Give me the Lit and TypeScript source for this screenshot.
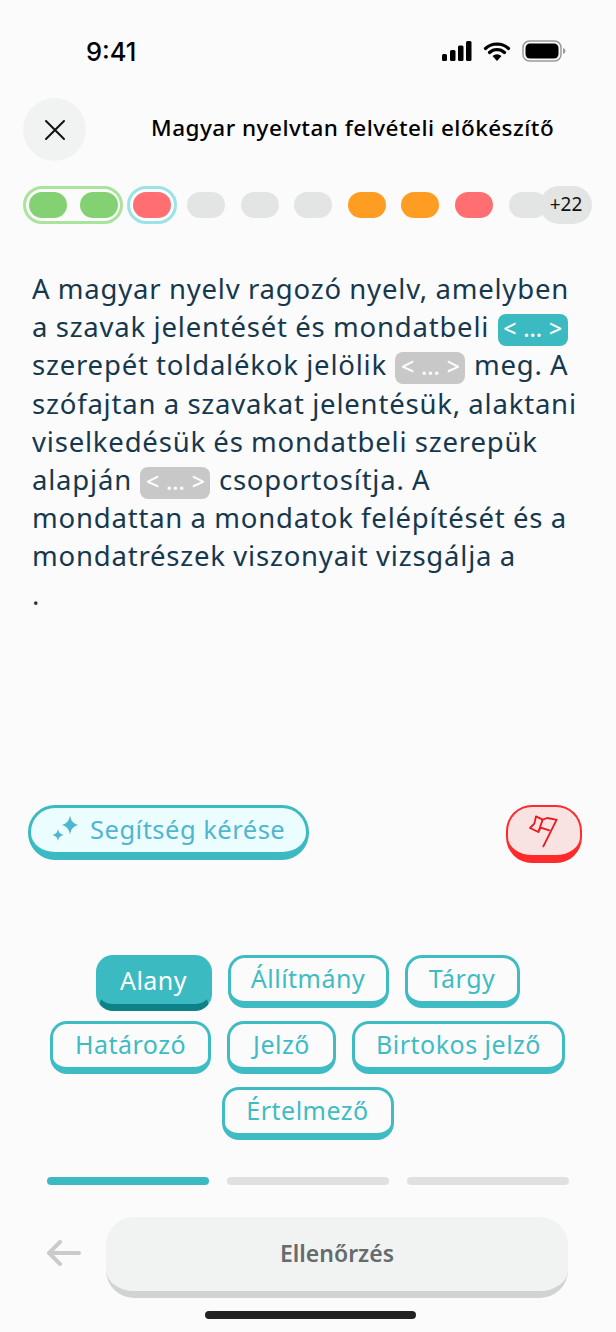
import { LitElement, css, html, svg, type TemplateResult } from "lit";
import { customElement } from "lit/decorators.js";

type Pill = "green" | "red" | "gray" | "orange";

const singlePills: Pill[] = ["gray", "gray", "gray", "orange", "orange", "red"];
const chipRows = [
  [
    { label: "Alany", width: 116 },
    { label: "Állítmány", width: 161 },
    { label: "Tárgy", width: 115 },
  ],
  [
    { label: "Határozó", width: 161 },
    { label: "Jelző", width: 109 },
    { label: "Birtokos jelző", width: 213 },
  ],
  [{ label: "Értelmező", width: 172 }],
];

const closeIcon = svg`<path d="M2 2l18 18M20 2L2 20" fill="none" stroke="#111" stroke-width="2" stroke-linecap="round"/>`;
const sparkle = svg`
  <path d="M19 .5c1.300 5.800 3 8 8.500 9.500-5.500 1.500-7.200 3.700-8.500 9.500-1.300-5.800-3-8-8.500-9.500C16 8.500 17.700 6.300 19 .5z" fill="#4fb6cf"/>
  <path d="M7 14c.8 3.500 1.900 4.900 5.500 6-3.600 1.100-4.700 2.500-5.500 6-.8-3.500-1.900-4.900-5.500-6 3.600-1.100 4.700-2.500 5.500-6z" fill="#4fb6cf"/>`;
const flagIcon = svg`
  <path d="M110 38L70 118" stroke="#e8181c" stroke-width="5.500" stroke-linecap="round" fill="none"/>
  <path d="M48 28L68 38L82 33L107 38M48 28L43 50L30 63L55 75L62 62L88 70M68 38L55 75" stroke="#e8181c" stroke-width="5.500" stroke-linejoin="round" stroke-linecap="round" fill="none"/>`;

@customElement("app-root")
export class AppRoot extends LitElement {
  private blank(kind: "active" | "idle"): TemplateResult {
    return html`<span class="blank ${kind}">&lt; ... &gt;</span>`;
  }

  render(): TemplateResult {
    return html`
      <div class="status">
        <span class="time">9:41</span>
        <div class="status-icons">
          <svg width="30" height="20" viewBox="0 0 30 20">
            <rect x="0" y="13" width="5" height="7" rx="1.500" />
            <rect x="8" y="9" width="5.500" height="11" rx="1.500" />
            <rect x="16" y="4.500" width="5.500" height="15.500" rx="1.500" />
            <rect x="24" y="0" width="5.500" height="20" rx="1.500" />
          </svg>
          <svg width="28" height="20" viewBox="0 0 28 20">
            <path d="M14 3a17 17 0 0 1 11.500 4.500M14 3A17 17 0 0 0 2.500 7.500M14 8.500a11 11 0 0 1 7.500 3M14 8.500a11 11 0 0 0-7.500 3" fill="none" stroke="#000" stroke-width="3.200" stroke-linecap="round" />
            <path d="M14 20l-4.500-5a6.500 6.500 0 0 1 9 0z" />
          </svg>
          <svg width="44" height="22" viewBox="0 0 44 22">
            <rect x="1" y="1" width="38" height="20" rx="6.500" fill="none" stroke="#9a9a9a" stroke-width="1.500" />
            <rect x="3.500" y="3.500" width="33" height="15" rx="4.500" />
            <path d="M41 8v6c1.500-.5 2.500-1.600 2.500-3S42.500 8.500 41 8z" fill="#9a9a9a" />
          </svg>
        </div>
      </div>

      <header class="top">
        <button class="close"><svg width="22" height="22" viewBox="0 0 22 22">${closeIcon}</svg></button>
        <h1>Magyar nyelvtan felvételi előkészítő</h1>
      </header>

      <div class="steps">
        <div class="group green-ring">
          <span class="pill green"></span>
          <span class="pill green"></span>
        </div>
        <div class="group cyan-ring"><span class="pill red"></span></div>
        <div class="singles">
          ${singlePills.map((p) => html`<span class="pill ${p}"></span>`)}
          <span class="pill gray last"></span>
        </div>
        <span class="more">+22</span>
      </div>

      <p class="passage">
        A magyar nyelv ragozó nyelv, amelyben<br />
        a szavak jelentését és mondatbeli ${this.blank("active")}<br />
        szerepét toldalékok jelölik ${this.blank("idle")} meg. A<br />
        szófajtan a szavakat jelentésük, alaktani<br />
        viselkedésük és mondatbeli szerepük<br />
        alapján ${this.blank("idle")} csoportosítja. A<br />
        mondattan a mondatok felépítését és a<br />
        mondatrészek viszonyait vizsgálja a<br />
        .
      </p>

      <div class="helpers">
        <button class="hint">
          <svg width="28" height="27" viewBox="0 0 28 27">${sparkle}</svg>
          Segítség kérése
        </button>
        <button class="flag"><svg width="50" height="50" viewBox="0 0 150 150">${flagIcon}</svg></button>
      </div>

      <div class="chips">
        ${chipRows.map(
          (row) => html`<div class="chip-row">
            ${row.map(
              (c) =>
                html`<button class="chip ${c.label === "Alany" ? "on" : ""}" style="width: ${c.width}px">
                  ${c.label}
                </button>`,
            )}
          </div>`,
        )}
      </div>

      <div class="pager">
        <span class="seg done"></span>
        <span class="seg"></span>
        <span class="seg"></span>
      </div>

      <div class="actions">
        <svg class="back" width="36" height="26" viewBox="0 0 36 26">
          <path d="M33 13H3M14 2L3 13l11 11" fill="none" stroke="#cbcbcb" stroke-width="4" stroke-linecap="round" stroke-linejoin="round" />
        </svg>
        <button class="check">Ellenőrzés</button>
      </div>

      <div class="home"></div>
    `;
  }

  static styles = css`
    :host {
      display: flex;
      flex-direction: column;
      width: 616px;
      height: 1332px;
      overflow: hidden;
      background: #fbfbfb;
      font-family: "Noto Sans", sans-serif;
      color: #16384e;
    }

    button {
      font: inherit;
      padding: 0;
      cursor: pointer;
    }

    .status {
      display: flex;
      justify-content: space-between;
      align-items: center;
      height: 22px;
      margin-top: 40px;
      padding: 0 50px 0 86px;
    }

    .time {
      font-family: Inter, "Liberation Sans", sans-serif;
      font-size: 25.500px;
      font-weight: 500;
      color: #000;
    }

    .status-icons {
      display: flex;
      align-items: center;
      gap: 11px;
    }

    .top {
      display: flex;
      align-items: center;
      margin-top: 36px;
      padding-left: 23px;
    }

    .close {
      display: flex;
      justify-content: center;
      align-items: center;
      width: 63px;
      height: 63px;
      border: none;
      border-radius: 50%;
      background: #f1f3f3;
    }

    h1 {
      margin: 0 0 4px 65px;
      font-size: 22.500px;
      font-weight: 500;
      letter-spacing: 0.49px;
      color: #000;
      white-space: nowrap;
    }

    .steps {
      display: flex;
      align-items: center;
      margin-top: 25px;
      padding-left: 23px;
      height: 38px;
      position: relative;
    }

    .group {
      display: flex;
      gap: 13px;
      box-sizing: border-box;
      height: 38px;
      padding: 3px;
      border: 3px solid;
      border-radius: 19px;
    }

    .green-ring {
      width: 100px;
      border-color: #a9e39c;
    }

    .cyan-ring {
      width: 50px;
      margin-left: 4px;
      border-color: #9be3e6;
    }

    .singles {
      display: flex;
      gap: 15.600px;
      margin-left: 10px;
    }

    .pill {
      display: block;
      flex: none;
      width: 38px;
      height: 26px;
      border-radius: 13px;
    }

    .pill.green {
      background: #83d172;
    }

    .pill.red {
      background: #ff6f71;
    }

    .pill.gray {
      background: #e3e5e4;
    }

    .pill.orange {
      background: #ff9d23;
    }

    .more {
      position: absolute;
      left: 540px;
      top: 0;
      width: 52px;
      height: 38px;
      border-radius: 19px;
      background: #e3e5e4;
      color: #111;
      font-size: 19px;
      line-height: 37px;
      text-align: center;
    }

    .passage {
      margin: 46px 0 0;
      padding-left: 32px;
      font-size: 27.500px;
      letter-spacing: 0.8px;
      word-spacing: -0.5px;
      line-height: 38.200px;
      white-space: nowrap;
      color: #16384e;
    }

    .blank {
      display: inline-block;
      box-sizing: border-box;
      width: 70px;
      height: 32px;
      margin: -6px 1px;
      border-radius: 8px;
      color: #fff;
      font-size: 23px;
      letter-spacing: 0;
      word-spacing: 1px;
      line-height: 29px;
      font-weight: 500;
      text-align: center;
      vertical-align: middle;
    }

    .blank.active {
      background: #3cbac1;
    }

    .blank.idle {
      background: #c8c8c8;
    }

    .helpers {
      display: flex;
      justify-content: space-between;
      align-items: flex-start;
      margin-top: 191px;
      padding: 0 34px 0 28px;
    }

    .hint {
      display: flex;
      align-items: center;
      gap: 11px;
      box-sizing: border-box;
      width: 281px;
      height: 55px;
      padding: 0 0 2px 20px;
      border: 3px solid #3cbac1;
      border-bottom-width: 8px;
      border-radius: 27px;
      background: #ecfdff;
      color: #4fb6cf;
      font-size: 25.500px;
      letter-spacing: 0.5px;
      white-space: nowrap;
    }

    .flag {
      display: flex;
      justify-content: center;
      align-items: center;
      box-sizing: border-box;
      width: 76px;
      height: 58px;
      padding: 3px 0 0 2px;
      border: 2.500px solid #ff2a2a;
      border-bottom-width: 8px;
      border-radius: 26px;
      background: #f9e3e2;
    }

    .chips {
      display: flex;
      flex-direction: column;
      gap: 13px;
      margin-top: 92px;
      padding-right: 1px;
    }

    .chip-row {
      display: flex;
      justify-content: center;
      gap: 16px;
      height: 53px;
    }

    .chip {
      box-sizing: border-box;
      height: 53px;
      padding: 0 0 2px;
      border: 3px solid #3fbcc3;
      border-bottom-width: 7px;
      border-radius: 17px;
      background: #fbfbfb;
      color: #3fbcc3;
      font-size: 25px;
      letter-spacing: 0.5px;
      white-space: nowrap;
    }

    .chip.on {
      height: 56px;
      border-color: #3cbac1;
      border-bottom: 7px solid #0e8189;
      background: #3cbac1;
      color: #fff;
    }

    .pager {
      display: flex;
      gap: 17.500px;
      margin: 37px 47px 0;
    }

    .seg {
      display: block;
      flex: 1;
      height: 8px;
      border-radius: 4px;
      background: #e0e0e0;
    }

    .seg.done {
      background: #3cbac1;
    }

    .actions {
      display: flex;
      align-items: center;
      margin-top: 32px;
      padding: 0 48px 0 46px;
    }

    .back {
      flex: none;
      margin: -8px 24px 0 0;
    }

    .check {
      flex: 1;
      height: 81px;
      padding-bottom: 2px;
      border: none;
      border-bottom: 7px solid #d0d3d3;
      border-radius: 28px;
      background: #f1f3f3;
      color: #666b6c;
      font-size: 23px;
      font-weight: 600;
    }

    .home {
      width: 211px;
      height: 8px;
      margin: 13px 0 0 205px;
      border-radius: 4px;
      background: #222;
    }
  `;
}

declare global {
  interface HTMLElementTagNameMap {
    "app-root": AppRoot;
  }
}
